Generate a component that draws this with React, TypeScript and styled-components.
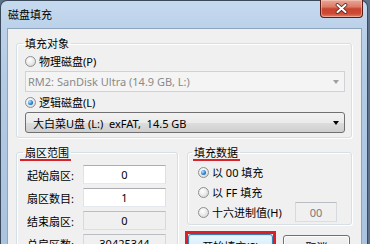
import React from 'react';
import styled, { createGlobalStyle, css } from 'styled-components';

const FONT = `"Segoe UI", "Noto Sans", "Noto Sans CJK SC", sans-serif`;

const Global = createGlobalStyle`
  html, body { margin: 0; padding: 0; width: 370px; height: 244px; overflow: hidden; background: #5d7189; }
  #root { width: 370px; height: 244px; overflow: hidden; }
`;

const Window = styled.div`
  width: 368px;
  height: 262px;
  box-sizing: border-box;
  border: 1px solid #3b4a5b;
  border-bottom: none;
  border-radius: 7px 7px 0 0;
  background: linear-gradient(180deg, #c6daef 0px, #bcd2ea 26px, #b3cbe5 80px, #a9c2de 100%);
  padding: 0 5px 0 6px;
  display: flex;
  flex-direction: column;
  font-family: ${FONT};
  font-size: 11px;
  color: #000;
`;

const TitleBar = styled.div`
  height: 27px;
  flex: none;
  display: flex;
  align-items: flex-start;
  justify-content: space-between;
`;

const Title = styled.div`
  padding: 7px 0 0 1px;
  line-height: 13px;
  font-size: 11px;
  color: #000;
`;

const CloseButton = styled.div`
  width: 43px;
  height: 18px;
  margin: -1px -1px 0 0;
  box-sizing: border-box;
  border: 1px solid #5a1d16;
  border-top: none;
  border-radius: 0 0 4px 4px;
  background: linear-gradient(180deg, #e9a797 0%, #dc7b68 40%, #c9432f 52%, #cf4a33 80%, #e0806a 100%);
  box-shadow: inset 0 0 0 1px rgba(255, 220, 210, 0.45);
  display: flex;
  align-items: center;
  justify-content: center;
`;

const Client = styled.div`
  flex: 1;
  background: #f0f0f0;
  border: 1px solid #8fa4bd;
  border-bottom: none;
  padding: 8px 9px 0 8px;
  display: flex;
  flex-direction: column;
`;

const Group = styled.fieldset<{ $w?: number; $pad: string }>`
  margin: 0;
  min-width: 0;
  box-sizing: border-box;
  ${p => p.$w && css`width: ${p.$w}px;`}
  border: 1px solid #d5dfe5;
  border-radius: 3px;
  box-shadow: inset 1px 1px 0 #fff, 1px 1px 0 #fff;
  padding: ${p => p.$pad};
  display: flex;
  flex-direction: column;
`;

const Legend = styled.legend`
  padding: 0 2px;
  margin-left: -2px;
  line-height: 13px;
  font-size: 11px;
  color: #000;
`;

const Marked = styled.span<{ $l: number; $r: number }>`
  display: inline-block;
  padding: 0 ${p => p.$r}px 0 ${p => p.$l}px;
  margin: 0 ${p => -p.$r}px 0 ${p => -p.$l}px;
  box-shadow: 0 2px 0 #d8232a;
`;

const RadioRow = styled.div<{ $h?: number; $indent?: number; $gap?: number }>`
  height: ${p => p.$h ?? 14}px;
  display: flex;
  align-items: center;
  gap: ${p => p.$gap ?? 3}px;
  margin-left: ${p => p.$indent ?? 0}px;
  white-space: nowrap;
`;

const RadioDot = styled.span<{ $on?: boolean }>`
  position: relative;
  flex: none;
  width: 11px;
  height: 11px;
  box-sizing: border-box;
  border-radius: 50%;
  border: 1px solid #8e8f8f;
  background: radial-gradient(circle at 40% 35%, #ffffff 0%, #ececec 45%, #cdcdcd 100%);
  ${p => p.$on && css`
    &::after {
      content: '';
      position: absolute;
      left: 2px;
      top: 2px;
      width: 5px;
      height: 5px;
      border-radius: 50%;
      background: radial-gradient(circle at 35% 35%, #b4e6ff 0%, #2a83d6 55%, #0d3c7e 100%);
    }
  `}
`;

const Combo = styled.div<{ $disabled?: boolean }>`
  height: 21px;
  margin-top: 3px;
  box-sizing: border-box;
  display: flex;
  align-items: center;
  justify-content: space-between;
  white-space: nowrap;
  ${p => p.$disabled ? css`
    border: 1px solid #cfd3d8;
    background: #f4f4f4;
    color: #8a8a8a;
    padding: 0 5px 0 2px;
  ` : css`
    border: 1px solid #707070;
    border-radius: 3px;
    background: linear-gradient(180deg, #f2f2f2 0%, #ebebeb 50%, #dddddd 51%, #cfcfcf 100%);
    color: #000;
    padding: 0 5px 0 7px;
  `}
`;

const Arrow = styled.span<{ $c: string }>`
  width: 0;
  height: 0;
  border-left: 3.5px solid transparent;
  border-right: 3.5px solid transparent;
  border-top: 4px solid ${p => p.$c};
`;

const Row = styled.div`
  display: flex;
  gap: 9px;
  margin-top: 8px;
  align-items: flex-start;
`;

const Column = styled.div`
  display: flex;
  flex-direction: column;
`;

const FieldRow = styled.div`
  display: grid;
  grid-template-columns: 58px 83px;
  align-items: center;
  height: 19px;
  margin-bottom: 4px;
`;

const Label = styled.span`
  padding-left: 2px;
  white-space: nowrap;
`;

const TextBox = styled.div<{ $disabled?: boolean; $w?: number; $muted?: boolean }>`
  height: 19px;
  ${p => p.$w && css`width: ${p.$w}px; flex: none;`}
  box-sizing: border-box;
  display: flex;
  align-items: center;
  justify-content: center;
  line-height: 13px;
  border: 1px solid;
  ${p => p.$disabled ? css`
    border-color: #b9bec4 #d6dade #dadee2 #d6dade;
    background: #f0f0f0;
  ` : css`
    border-color: #abadb3 #dbdfe6 #e3e9ef #e2e3ea;
    background: #ffffff;
  `}
  color: ${p => (p.$muted ? '#7a7a7a' : '#000')};
`;

const HexBox = styled(TextBox)`
  height: 20px;
  margin-left: auto;
`;

const ButtonRow = styled.div`
  display: flex;
  align-items: flex-start;
  margin: 6px 0 0 -2px;
`;

const Highlight = styled.div`
  border: 3px solid #dc1f26;
  display: flex;
`;

const Button = styled.div<{ $default?: boolean; $w: number }>`
  width: ${p => p.$w}px;
  height: 23px;
  box-sizing: border-box;
  border-radius: 3px;
  display: flex;
  align-items: center;
  justify-content: center;
  white-space: nowrap;
  ${p => p.$default ? css`
    border: 1px solid #3c7fb1;
    background: linear-gradient(180deg, #eaf6fd 0%, #d9f0fc 50%, #bee6fd 51%, #a7d9f5 100%);
    box-shadow: inset 0 0 0 1px #c9ecfd;
  ` : css`
    border: 1px solid #707070;
    background: linear-gradient(180deg, #f2f2f2 0%, #ebebeb 50%, #dddddd 51%, #cfcfcf 100%);
    box-shadow: inset 0 0 0 1px #fcfcfc;
    margin: 4px 0 0 7px;
  `}
`;

const CloseIcon = () => (
  <svg width="13" height="11" viewBox="0 0 13 11">
    <path d="M2.5 2 L10.5 9 M10.5 2 L2.5 9" stroke="#4a1610" strokeWidth="3.6" strokeLinecap="round" />
    <path d="M2.5 2 L10.5 9 M10.5 2 L2.5 9" stroke="#ffffff" strokeWidth="2.2" strokeLinecap="round" />
  </svg>
);

export default function App() {
  return (
    <>
      <Global />
      <Window>
        <TitleBar>
          <Title>磁盘填充</Title>
          <CloseButton>
            <CloseIcon />
          </CloseButton>
        </TitleBar>
        <Client>
          <Group $pad="4px 6px 4px 8px">
            <Legend>填充对象</Legend>
            <RadioRow>
              <RadioDot />
              <span>物理磁盘(P)</span>
            </RadioRow>
            <Combo $disabled>
              <span>RM2: SanDisk Ultra (14.9 GB, L:)</span>
              <Arrow $c="#a0a0a0" />
            </Combo>
            <RadioRow style={{ marginTop: 3 }}>
              <RadioDot $on />
              <span>逻辑磁盘(L)</span>
            </RadioRow>
            <Combo>
              <span>大白菜U盘 (L:)&nbsp; exFAT,&nbsp; 14.5 GB</span>
              <Arrow $c="#000" />
            </Combo>
          </Group>
          <Row>
            <Group $w={163} $pad="6px 12px 0 8px">
              <Legend>
                <Marked $l={5} $r={2}>扇区范围</Marked>
              </Legend>
              <FieldRow>
                <Label>起始扇区:</Label>
                <TextBox>0</TextBox>
              </FieldRow>
              <FieldRow>
                <Label>扇区数目:</Label>
                <TextBox>1</TextBox>
              </FieldRow>
              <FieldRow>
                <Label>结束扇区:</Label>
                <TextBox $disabled>0</TextBox>
              </FieldRow>
              <FieldRow>
                <Label>总扇区数:</Label>
                <TextBox $disabled>30425344</TextBox>
              </FieldRow>
            </Group>
            <Column>
              <Group $w={165} $pad="3px 14px 2px 6px">
                <Legend>
                  <Marked $l={1} $r={2}>填充数据</Marked>
                </Legend>
                <RadioRow $h={20} $indent={4}>
                  <RadioDot $on />
                  <span>以 00 填充</span>
                </RadioRow>
                <RadioRow $h={20} $indent={4}>
                  <RadioDot />
                  <span>以 FF 填充</span>
                </RadioRow>
                <RadioRow $h={20} $indent={4}>
                  <RadioDot />
                  <span>十六进制值(H)</span>
                  <HexBox $disabled $muted $w={42}>00</HexBox>
                </RadioRow>
              </Group>
              <ButtonRow>
                <Highlight>
                  <Button $default $w={85}>开始填充(S)</Button>
                </Highlight>
                <Button $w={67}>取消</Button>
              </ButtonRow>
            </Column>
          </Row>
        </Client>
      </Window>
    </>
  );
}
